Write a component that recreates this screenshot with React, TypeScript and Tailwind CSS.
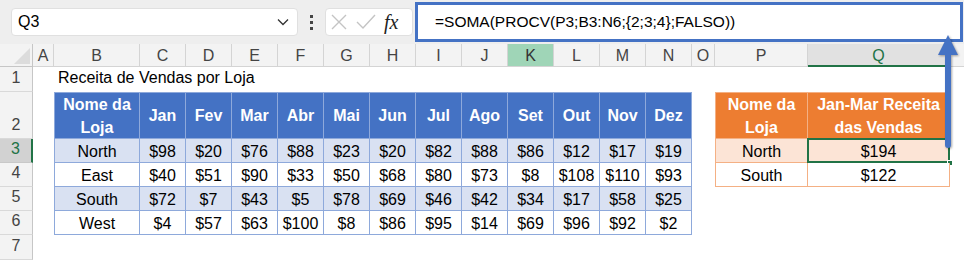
import React from "react";

const cols = ["A", "B", "C", "D", "E", "F", "G", "H", "I", "J", "K", "L", "M", "N", "O", "P", "Q"];
const months = ["Jan", "Fev", "Mar", "Abr", "Mai", "Jun", "Jul", "Ago", "Set", "Out", "Nov", "Dez"];

const rows = [
  { name: "North", vals: ["$98", "$20", "$76", "$88", "$23", "$20", "$82", "$88", "$86", "$12", "$17", "$19"] },
  { name: "East", vals: ["$40", "$51", "$90", "$33", "$50", "$68", "$80", "$73", "$8", "$108", "$110", "$93"] },
  { name: "South", vals: ["$72", "$7", "$43", "$5", "$78", "$69", "$46", "$42", "$34", "$17", "$58", "$25"] },
  { name: "West", vals: ["$4", "$57", "$63", "$100", "$8", "$86", "$95", "$14", "$69", "$96", "$92", "$2"] },
];

const lookup: Record<number, [string, string]> = {
  0: ["North", "$194"],
  1: ["South", "$122"],
};

// row numbers sit at the bottom of their row, like Excel does
function RowHead({ n, active }: { n: number; active?: boolean }) {
  return (
    <div
      className={
        active
          ? "flex items-end justify-center pb-[1px] bg-[#d2d2d2] text-[#217346] border-b border-[#c8c8c8] border-r-2 border-r-[#217346]"
          : "flex items-end justify-center pb-[1px] bg-[#f3f3f3] text-[#444] border-b border-[#d9d9d9] border-r border-r-[#c6c6c6]"
      }
    >
      {n}
    </div>
  );
}

function FormulaBar() {
  return (
    <div className="h-[44px] bg-[#eeeeee] flex items-center">
      <div className="ml-[11px] w-[287px] h-[28px] bg-white rounded-[4px] border border-[#e0e0e0] flex items-center justify-between px-[6px]">
        <span className="text-[16px] text-black">Q3</span>
        <svg width="12" height="8" viewBox="0 0 12 8" className="mr-[2px]">
          <path d="M1 1.5 L6 6.5 L11 1.5" fill="none" stroke="#333" strokeWidth="1.3" />
        </svg>
      </div>
      <div className="w-[27px] flex flex-col items-center gap-[3px]">
        <span className="w-[3px] h-[3px] bg-[#444]" />
        <span className="w-[3px] h-[3px] bg-[#444]" />
        <span className="w-[3px] h-[3px] bg-[#444]" />
      </div>
      <div className="w-[88px] h-[28px] bg-white rounded-[4px] border border-[#e0e0e0] flex items-center px-[4px] gap-[7px]">
        <svg width="18" height="18" viewBox="0 0 18 18">
          <path d="M2 2 L16 16 M16 2 L2 16" stroke="#c4c4c4" strokeWidth="1.4" fill="none" />
        </svg>
        <svg width="22" height="18" viewBox="0 0 22 18">
          <path d="M2 9 L8 15 L20 2" stroke="#c4c4c4" strokeWidth="1.4" fill="none" />
        </svg>
        <span className="text-[20px] italic text-[#222] leading-none font-['Liberation_Serif',serif]">fx</span>
      </div>
      <div className="ml-[2px] flex-1 h-[40px] mr-[1px] bg-white border-[3px] border-[#4472c4] flex items-center pl-[17px]">
        <span className="text-[15.5px] text-black">=SOMA(PROCV(P3;B3:N6;{"{"}2;3;4{"}"};FALSO))</span>
      </div>
    </div>
  );
}

export default function App() {
  const blue = "border-r border-b border-[#8ea9db]";
  const orange = "border-r border-b border-[#f4b084]";

  return (
    <div className="relative w-[964px] h-[260px] overflow-hidden bg-white font-['Liberation_Sans',Arial,sans-serif] text-[16px]">
      <FormulaBar />
      <div className="grid grid-cols-[33px_21px_86px_repeat(12,46px)_23px_93px_142px_1fr] grid-rows-[23px_25px_47px_24px_24px_24px_24px_25px]">
        {/* column headers */}
        <div className="relative bg-[#f3f3f3] border-r border-b border-[#c6c6c6] overflow-hidden">
          <div className="absolute right-[2px] bottom-[2px] w-0 h-0 border-l-[16px] border-l-transparent border-b-[16px] border-b-[#dcdcdc]" />
        </div>
        {cols.map((c) => (
          <div
            key={c}
            className={
              c === "Q"
                ? "flex items-center justify-center pt-[2px] bg-[#e1e1e1] text-[#217346] border-r border-[#d4d4d4] border-b-2 border-b-[#217346]"
                : c === "K"
                ? "flex items-center justify-center pt-[2px] bg-[#9fd5b7] text-[#333] border-r border-b border-[#d4d4d4]"
                : "flex items-center justify-center pt-[2px] bg-[#f3f3f3] text-[#444] border-r border-b border-[#d4d4d4]"
            }
          >
            {c}
          </div>
        ))}
        <div className="bg-[#f3f3f3] border-b border-[#d4d4d4]" />

        {/* row 1 */}
        <RowHead n={1} />
        <div />
        <div className="relative">
          <span className="absolute left-[4px] bottom-[2px] whitespace-nowrap text-black">Receita de Vendas por Loja</span>
        </div>
        {Array.from({ length: 16 }).map((_, i) => (
          <div key={i} />
        ))}

        {/* row 2 */}
        <RowHead n={2} />
        <div />
        <div className={`${blue} border-l border-t bg-[#4472c4] text-white font-bold flex items-center justify-center text-center leading-[23px]`}>
          Nome da
          <br />
          Loja
        </div>
        {months.map((m) => (
          <div key={m} className={`${blue} border-t bg-[#4472c4] text-white font-bold flex items-center justify-center`}>
            {m}
          </div>
        ))}
        <div />
        <div className={`${orange} border-l border-t bg-[#ed7d31] text-white font-bold flex items-center justify-center text-center leading-[23px]`}>
          Nome da
          <br />
          Loja
        </div>
        <div className={`${orange} border-t bg-[#ed7d31] text-white font-bold flex items-center justify-center text-center leading-[23px]`}>
          Jan-Mar Receita
          <br />
          das Vendas
        </div>
        <div />

        {/* data rows */}
        {rows.map((r, ri) => {
          const band = ri % 2 === 0 ? "bg-[#d9e1f2]" : "bg-white";
          const lk = lookup[ri];
          return (
            <React.Fragment key={r.name}>
              <RowHead n={ri + 3} active={ri === 0} />
              <div />
              <div className={`${blue} ${band} border-l flex items-center justify-center pt-[2px] text-black`}>{r.name}</div>
              {r.vals.map((v, vi) => (
                <div key={vi} className={`${blue} ${band} flex items-center justify-center pt-[2px] text-black`}>
                  {v}
                </div>
              ))}
              <div />
              {lk ? (
                <>
                  <div className={`${orange} border-l ${ri === 0 ? "bg-[#fce4d6]" : "bg-white"} flex items-center justify-center pt-[2px] text-black`}>
                    {lk[0]}
                  </div>
                  <div className={`${orange} ${ri === 0 ? "bg-[#fce4d6]" : "bg-white"} relative flex items-center justify-center pt-[2px] text-black`}>
                    {lk[1]}
                    {ri === 0 && (
                      <>
                        <div className="absolute -left-px -top-px -right-px -bottom-px border-2 border-[#217346]" />
                        <div className="absolute -right-[4px] -bottom-[4px] w-[6px] h-[6px] bg-[#217346] border border-white" />
                      </>
                    )}
                  </div>
                </>
              ) : (
                <>
                  <div />
                  <div />
                </>
              )}
              <div />
            </React.Fragment>
          );
        })}

        {/* row 7 */}
        <RowHead n={7} />
        {Array.from({ length: 18 }).map((_, i) => (
          <div key={i} />
        ))}
      </div>

      {/* arrow pointing at the formula */}
      <svg
        className="absolute left-[936px] top-[33px] drop-shadow-[1px_1px_1px_rgba(0,0,0,0.35)]"
        width="24"
        height="118"
        viewBox="0 0 24 118"
      >
        <path d="M12 2 L22 22 L15 22 L15 112 Q15 115 12 115 Q9 115 9 112 L9 22 L2 22 Z" fill="#4472c4" />
      </svg>
    </div>
  );
}
